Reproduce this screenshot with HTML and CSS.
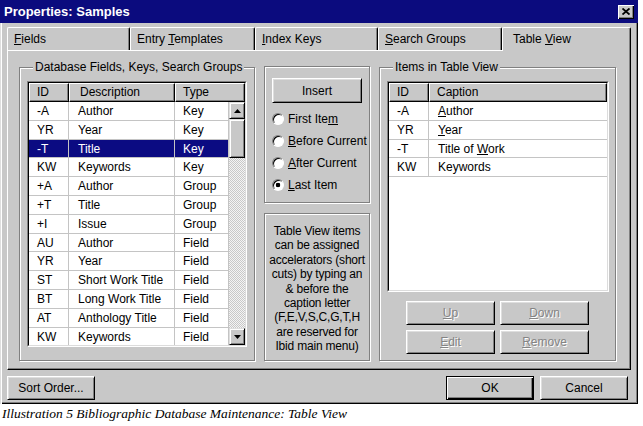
FILE: index.html
```html
<!DOCTYPE html>
<html>
<head>
<meta charset="utf-8">
<title>Properties: Samples</title>
<link rel="stylesheet" href="styles.css">
</head>
<body>
<div class="window">
  <div class="titlebar">
    <span class="title">Properties: Samples</span>
    <span class="close"><svg width="8" height="7" viewBox="0 0 8 7"><path d="M0.5 0.5 L7.5 6.5 M7.5 0.5 L0.5 6.5" stroke="#000" stroke-width="1.8" fill="none"/></svg></span>
  </div>
  <div class="tabs">
    <div class="tab t1"><u>F</u>ields</div>
    <div class="tab t2">Entry <u>T</u>emplates</div>
    <div class="tab t3"><u>I</u>ndex Keys</div>
    <div class="tab t4"><u>S</u>earch Groups</div>
    <div class="tab t5 selected">Table <u>V</u>iew</div>
  </div>
  <div class="panel">
    <fieldset class="group left-group">
      <legend>Database Fields, Keys, Search Groups</legend>
      <div class="list list-left">
        <div class="list-in">
          <div class="header">
            <div class="hcell c-id">ID</div>
            <div class="hcell c-desc">Description</div>
            <div class="hcell c-fill">Type</div>
          </div>
          <div class="list-body">
            <div class="rows rows3">
              <div class="cell">-A</div><div class="cell">Author</div><div class="cell">Key</div>
              <div class="cell">YR</div><div class="cell">Year</div><div class="cell">Key</div>
              <div class="cell sel">-T</div><div class="cell sel">Title</div><div class="cell sel">Key</div>
              <div class="cell">KW</div><div class="cell">Keywords</div><div class="cell">Key</div>
              <div class="cell">+A</div><div class="cell">Author</div><div class="cell">Group</div>
              <div class="cell">+T</div><div class="cell">Title</div><div class="cell">Group</div>
              <div class="cell">+I</div><div class="cell">Issue</div><div class="cell">Group</div>
              <div class="cell">AU</div><div class="cell">Author</div><div class="cell">Field</div>
              <div class="cell">YR</div><div class="cell">Year</div><div class="cell">Field</div>
              <div class="cell">ST</div><div class="cell">Short Work Title</div><div class="cell">Field</div>
              <div class="cell">BT</div><div class="cell">Long Work Title</div><div class="cell">Field</div>
              <div class="cell">AT</div><div class="cell">Anthology Title</div><div class="cell">Field</div>
              <div class="cell">KW</div><div class="cell">Keywords</div><div class="cell">Field</div>
            </div>
            <div class="scrollbar">
              <div class="sbtn"><svg width="7" height="4" viewBox="0 0 7 4"><path d="M3.5 0 L7 4 L0 4 Z" fill="#000"/></svg></div>
              <div class="thumb"></div>
              <div class="track"></div>
              <div class="sbtn"><svg width="7" height="4" viewBox="0 0 7 4"><path d="M0 0 L7 0 L3.5 4 Z" fill="#000"/></svg></div>
            </div>
          </div>
        </div>
      </div>
    </fieldset>

    <div class="middle">
      <div class="group plain insert-group">
        <button class="btn insert">Insert</button>
        <div class="radios">
          <div class="radio-row"><span class="radio"></span><span>First Ite<u>m</u></span></div>
          <div class="radio-row"><span class="radio"></span><span><u>B</u>efore Current</span></div>
          <div class="radio-row"><span class="radio"></span><span><u>A</u>fter Current</span></div>
          <div class="radio-row"><span class="radio checked"></span><span><u>L</u>ast Item</span></div>
        </div>
      </div>
      <div class="group plain note">
        Table View items<br>can be assigned<br>accelerators (short<br>cuts) by typing an<br>&amp; before the<br>caption letter<br>(F,E,V,S,C,G,T,H<br>are reserved for<br>Ibid main menu)
      </div>
    </div>

    <fieldset class="group right-group">
      <legend>Items in Table View</legend>
      <div class="list list-right">
        <div class="list-in">
          <div class="header">
            <div class="hcell c-id">ID</div>
            <div class="hcell c-fill">Caption</div>
          </div>
          <div class="rows rows2">
            <div class="cell">-A</div><div class="cell"><u>A</u>uthor</div>
            <div class="cell">YR</div><div class="cell"><u>Y</u>ear</div>
            <div class="cell">-T</div><div class="cell">Title of <u>W</u>ork</div>
            <div class="cell">KW</div><div class="cell">Keywords</div>
          </div>
        </div>
      </div>
      <div class="btn-grid">
        <button class="btn disabled"><u>U</u>p</button>
        <button class="btn disabled"><u>D</u>own</button>
        <button class="btn disabled"><u>E</u>dit</button>
        <button class="btn disabled"><u>R</u>emove</button>
      </div>
    </fieldset>
  </div>
  <div class="footer">
    <button class="btn foot">Sort Order...</button>
    <div class="spacer"></div>
    <button class="btn foot default">OK</button>
    <button class="btn foot">Cancel</button>
  </div>
</div>
<p class="caption">Illustration 5 Bibliographic Database Maintenance: Table View</p>
</body>
</html>
```

FILE: styles.css
```css
* { box-sizing: border-box; }
html, body { margin: 0; padding: 0; background: #fff; }
body {
  font-family: "Liberation Sans", Arial, sans-serif;
  font-size: 12px;
  color: #000;
  width: 643px;
  height: 426px;
  overflow: hidden;
}

.window {
  width: 638px;
  height: 404px;
  background: #c8c8c8;
  display: flex;
  flex-direction: column;
  box-shadow: inset 1px 0 0 #dedede, inset 2px 0 0 #fff, inset -1px -1px 0 #000, inset -2px -2px 0 #808080;
}

.titlebar {
  height: 23px;
  flex: none;
  background: #0b0b7e;
  color: #fff;
  display: flex;
  align-items: center;
  justify-content: space-between;
  padding: 0 4px 0 4px;
}
.title { font-weight: bold; font-size: 13px; }
.close {
  width: 16px;
  height: 14px;
  background: #c8c8c8;
  display: flex;
  align-items: center;
  justify-content: center;
  box-shadow: inset 1px 1px 0 #fff, inset -1px -1px 0 #000, inset -2px -2px 0 #808080;
}
.close svg { display: block; }

.tabs {
  display: flex;
  margin: 4px 0 0 7px;
  height: 23px;
  flex: none;
}
.tab {
  height: 23px;
  padding: 4px 0 0 6px;
  border-top: 1px solid #fff;
  border-left: 1px solid #fff;
  border-right: 1px solid #000;
  box-shadow: inset -1px 0 0 #808080;
  border-radius: 2px 2px 0 0;
  line-height: 14px;
  white-space: nowrap;
}
.t1 { width: 123px; }
.t2 { width: 125px; }
.t3 { width: 123px; }
.t4 { width: 124px; }
.t5 { width: 129px; padding-left: 10px; }
.tab.selected {
  height: 24px;
  margin-bottom: -1px;
  background: #c8c8c8;
  position: relative;
  z-index: 1;
}

.panel {
  flex: none;
  margin-left: 7px;
  width: 624px;
  height: 320px;
  border-top: 1px solid #fff;
  border-left: 1px solid #fff;
  border-right: 1px solid #000;
  border-bottom: 1px solid #000;
  box-shadow: inset -1px -1px 0 #808080;
  display: flex;
  gap: 9px;
  padding: 9px 14px 8px 11px;
}

.group {
  margin: 0;
  border: 1px solid #808080;
  box-shadow: inset 1px 1px 0 #fff, 1px 1px 0 #fff;
  min-width: 0;
}
.group legend {
  padding: 0 2px;
  margin-left: 6px;
  background: #c8c8c8;
  line-height: 14px;
}
.left-group { width: 236px; padding: 7px 7px 0 7px; }
.right-group { width: 237px; padding: 7px 7px 0 7px; }

.list {
  background: #fff;
  border: 1px solid;
  border-color: #808080 #fff #fff #808080;
}
.list-in {
  height: 100%;
  border: 1px solid;
  border-color: #000 #dcdcdc #dcdcdc #000;
  display: flex;
  flex-direction: column;
  overflow: hidden;
}
.list-left { width: 220px; height: 266px; }
.list-right { width: 222px; height: 211px; }

.header { display: flex; height: 19px; flex: none; }
.hcell {
  background: #c8c8c8;
  border-top: 1px solid #fff;
  border-left: 1px solid #fff;
  border-right: 1px solid #000;
  border-bottom: 1px solid #000;
  box-shadow: inset -1px -1px 0 #808080;
  padding-left: 7px;
  line-height: 16px;
  white-space: nowrap;
}
.c-id { width: 40px; }
.c-desc { width: 106px; padding-left: 10px; }
.c-fill { flex: 1; }

.list-body { display: flex; flex: 1; min-height: 0; }
.rows { display: grid; grid-auto-rows: 18.8px; align-content: start; overflow: hidden; }
.rows3 { width: 200px; grid-template-columns: 40px 106px 54px; }
.rows2 { grid-template-columns: 40px 1fr; }
.cell {
  border-right: 1px solid #c4c4c4;
  border-bottom: 1px solid #c4c4c4;
  padding-left: 8px;
  line-height: 18px;
  white-space: nowrap;
  overflow: hidden;
}
.rows3 .cell:nth-child(3n+2) { padding-left: 9px; }
.rows2 .cell:nth-child(2n) { padding-left: 9px; border-right: none; }
.cell.sel { background: #0b0b82; color: #fff; }

.scrollbar { width: 16px; display: flex; flex-direction: column; }
.sbtn, .thumb {
  background: #c8c8c8;
  border-top: 1px solid #dedede;
  border-left: 1px solid #dedede;
  border-right: 1px solid #000;
  border-bottom: 1px solid #000;
  box-shadow: inset 1px 1px 0 #fff, inset -1px -1px 0 #808080;
}
.sbtn { height: 17px; display: flex; align-items: center; justify-content: center; flex: none; }
.sbtn svg { display: block; }
.thumb { height: 39px; flex: none; }
.track {
  flex: 1;
  background: repeating-conic-gradient(#c8c8c8 0 25%, #f4f4f4 0 50%) 0 0 / 2px 2px;
}

.middle { width: 106px; display: flex; flex-direction: column; gap: 10px; padding-top: 6px; }
.plain { border: 1px solid #808080; }
.insert-group { padding: 11px 0 6px 7px; height: 137px; flex: none; }
.btn {
  font-family: "Liberation Sans", Arial, sans-serif;
  font-size: 12px;
  color: #000;
  background: #c8c8c8;
  padding: 0;
  border: 1px solid;
  border-color: #fff #000 #000 #fff;
  box-shadow: inset 1px 1px 0 #dedede, inset -1px -1px 0 #808080;
  display: flex;
  align-items: center;
  justify-content: center;
  height: 24px;
}
.insert { width: 90px; height: 25px; }
.radios { margin-top: 5px; }
.radio-row { height: 22px; display: flex; align-items: center; gap: 4px; white-space: nowrap; }
.radio {
  width: 12px;
  height: 12px;
  border-radius: 50%;
  border: 1px solid;
  border-color: #808080 #fff #fff #808080;
  background: #fff;
  box-shadow: inset 1px 1px 0 #000;
  flex: none;
}
.radio.checked { background: radial-gradient(circle, #000 0 2px, #fff 2.6px); }

.note {
  flex: 1;
  text-align: center;
  line-height: 14.4px;
  padding-top: 10px;
  white-space: nowrap;
  letter-spacing: -0.2px;
}

.btn-grid {
  display: grid;
  grid-template-columns: 89px 89px;
  gap: 5px;
  justify-content: center;
  margin-top: 9px;
}
.btn.disabled { color: #848484; text-shadow: 1px 1px 0 #fff; }

.footer { flex: none; display: flex; gap: 6px; padding: 6px 10px 0 7px; }
.spacer { flex: 1; }
.btn.foot { width: 88px; height: 24px; }
.btn.default {
  border-color: #000;
  box-shadow: inset 1px 1px 0 #fff, inset -1px -1px 0 #000, inset -2px -2px 0 #808080;
}

.caption {
  margin: 0;
  padding: 2px 0 0 2px;
  font-family: "Liberation Serif", "Times New Roman", serif;
  font-style: italic;
  font-size: 13.5px;
  line-height: 16px;
}
```
